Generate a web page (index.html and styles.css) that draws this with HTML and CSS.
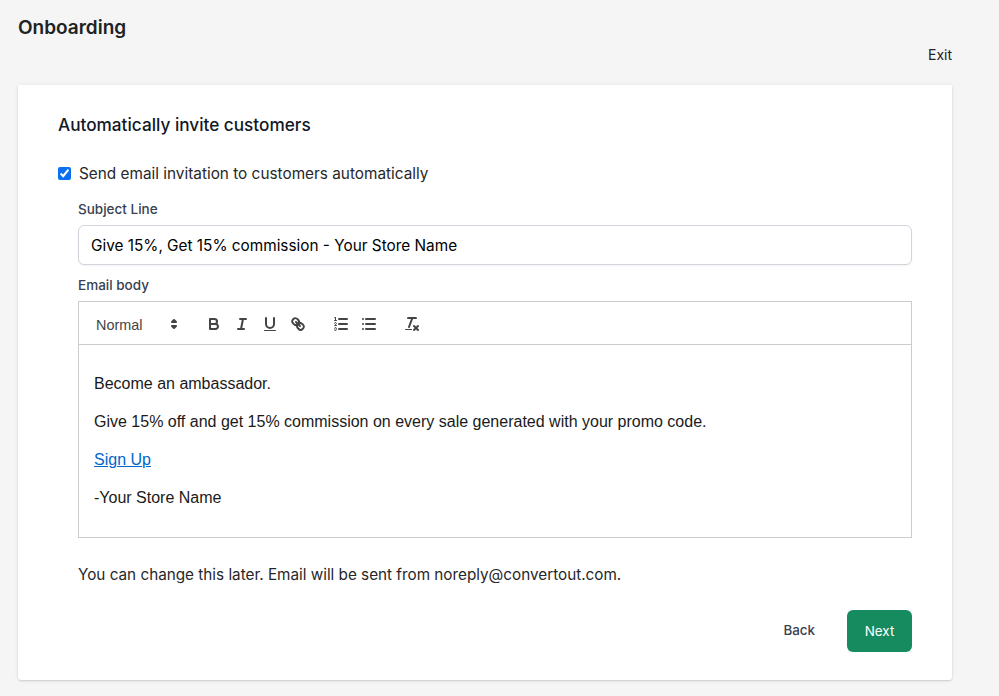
FILE: index.html
```html
<!DOCTYPE html>
<html lang="en">
<head>
<meta charset="utf-8">
<title>Onboarding</title>
<link rel="stylesheet" href="styles.css">
</head>
<body>
<header class="page-head">
  <h1 class="page-title">Onboarding</h1>
  <div class="exit-row"><a class="exit" href="#">Exit</a></div>
</header>
<main class="card">
  <h2 class="card-title">Automatically invite customers</h2>
  <label class="check-row">
    <input class="check" type="checkbox" checked>
    <span>Send email invitation to customers automatically</span>
  </label>
  <div class="fields">
    <label class="field-label" for="subject">Subject Line</label>
    <input class="text-input" id="subject" type="text" value="Give 15%, Get 15% commission - Your Store Name">
    <div class="field-label body-label">Email body</div>
    <div class="toolbar">
      <span class="picker">
        <span>Normal</span>
        <svg class="icon picker-icon" viewBox="0 0 18 18"><polygon class="st" points="7 11 9 13 11 11 7 11"/><polygon class="st" points="7 7 9 5 11 7 7 7"/></svg>
      </span>
      <span class="group">
        <span class="tool"><svg class="icon" viewBox="0 0 18 18"><path class="st" d="M5,4H9.5A2.5,2.5,0,0,1,12,6.5v0A2.5,2.5,0,0,1,9.5,9H5A0,0,0,0,1,5,9V4A0,0,0,0,1,5,4Z"/><path class="st" d="M5,9h5.5A2.5,2.5,0,0,1,13,11.5v0A2.5,2.5,0,0,1,10.5,14H5a0,0,0,0,1,0,0V9A0,0,0,0,1,5,9Z"/></svg></span>
        <span class="tool"><svg class="icon" viewBox="0 0 18 18"><line class="st" x1="7" x2="13" y1="4" y2="4"/><line class="st" x1="5" x2="11" y1="14" y2="14"/><line class="st" x1="8" x2="10" y1="14" y2="4"/></svg></span>
        <span class="tool"><svg class="icon" viewBox="0 0 18 18"><path class="st" d="M5,3V9a4.012,4.012,0,0,0,4,4H9a4.012,4.012,0,0,0,4-4V3"/><rect class="fl" height="1" rx="0.5" ry="0.5" width="12" x="3" y="15"/></svg></span>
        <span class="tool"><svg class="icon" viewBox="0 0 18 18"><line class="st" x1="7" x2="11" y1="7" y2="11"/><path class="st" d="M8.9,4.577a3.476,3.476,0,0,1,.36,4.679A3.476,3.476,0,0,1,4.577,8.9C3.185,7.5,2.035,6.4,4.217,4.217S7.5,3.185,8.9,4.577Z"/><path class="st" d="M13.423,9.1a3.476,3.476,0,0,0-4.679-.36,3.476,3.476,0,0,0,.36,4.679c1.392,1.392,2.5,2.542,4.679.36S14.815,10.5,13.423,9.1Z"/></svg></span>
      </span>
      <span class="group">
        <span class="tool"><svg class="icon" viewBox="0 0 18 18"><line class="st" x1="7" x2="15" y1="4" y2="4"/><line class="st" x1="7" x2="15" y1="9" y2="9"/><line class="st" x1="7" x2="15" y1="14" y2="14"/><line class="st thin" x1="2.5" x2="4.5" y1="5.5" y2="5.5"/><path class="fl" d="M3.5,6A0.5,0.5,0,0,1,3,5.5V3.085l-0.276.138A0.5,0.5,0,0,1,2.053,3c-0.124-.247-0.023-0.324.224-0.447l1-.5A0.5,0.5,0,0,1,4,2.5v3A0.5,0.5,0,0,1,3.5,6Z"/><path class="st thin" d="M4.5,10.5h-2c0-.234,1.85-1.076,1.85-2.234A0.959,0.959,0,0,0,2.5,8.156"/><path class="st thin" d="M2.5,14.846a0.959,0.959,0,0,0,1.85-.109A0.7,0.7,0,0,0,3.75,14a0.688,0.688,0,0,0,.6-0.736,0.959,0.959,0,0,0-1.85-.109"/></svg></span>
        <span class="tool"><svg class="icon" viewBox="0 0 18 18"><line class="st" x1="6" x2="15" y1="4" y2="4"/><line class="st" x1="6" x2="15" y1="9" y2="9"/><line class="st" x1="6" x2="15" y1="14" y2="14"/><line class="st" x1="3" x2="3" y1="4" y2="4"/><line class="st" x1="3" x2="3" y1="9" y2="9"/><line class="st" x1="3" x2="3" y1="14" y2="14"/></svg></span>
      </span>
      <span class="group">
        <span class="tool"><svg class="icon" viewBox="0 0 18 18"><line class="st" x1="5" x2="13" y1="3" y2="3"/><line class="st" x1="6" x2="9.35" y1="12" y2="3"/><line class="st" x1="11" x2="15" y1="11" y2="15"/><line class="st" x1="15" x2="11" y1="11" y2="15"/><rect class="fl" height="1" rx="0.5" ry="0.5" width="7" x="2" y="14"/></svg></span>
      </span>
    </div>
    <div class="editor">
      <p>Become an ambassador.</p>
      <p>Give 15% off and get 15% commission on every sale generated with your promo code.</p>
      <p><a href="#">Sign Up</a></p>
      <p>-Your Store Name</p>
    </div>
    <p class="note">You can change this later. Email will be sent from noreply@convertout.com.</p>
    <div class="actions">
      <button class="btn btn-plain" type="button">Back</button>
      <button class="btn btn-primary" type="button">Next</button>
    </div>
  </div>
</main>
</body>
</html>
```

FILE: styles.css
```css
* { box-sizing: border-box; }
html, body { margin: 0; padding: 0; }
body {
  background: #f5f5f5;
  font-family: Inter, "Liberation Sans", sans-serif;
  color: #1a202c;
  height: 696px;
  overflow: hidden;
}
.page-head { padding: 16px 47px 0 18px; height: 85px; }
.page-title {
  margin: 0;
  font-size: 19px;
  line-height: 24px;
  font-weight: 600;
  color: #202223;
}
.exit-row { display: flex; justify-content: flex-end; margin-top: 6px; }
.exit { font-size: 14px; line-height: 18px; color: #202223; text-decoration: none; }
.card {
  margin-left: 18px;
  width: 934px;
  height: 595px;
  background: #fff;
  box-shadow: 0 0 5px rgba(23, 24, 24, 0.05), 0 1px 2px rgba(0, 0, 0, 0.15);
  padding: 30px 40px 0;
  border-radius: 0 0 3px 3px;
}
.card-title { margin: 0; font-size: 17.2px; line-height: 20px; font-weight: 500; color: #111827; }
.check-row { display: flex; align-items: center; gap: 8px; margin-top: 29px; font-size: 15.35px; line-height: 20px; color: #27272a; }
.check { width: 13px; height: 13px; margin: -1px 0 0; accent-color: #0b6ff0; }
.fields { padding: 0 0 0 20px; }
.field-label { display: block; margin-top: 15px; font-size: 13.5px; line-height: 20px; font-weight: 500; color: #374151; }
.text-input {
  display: block;
  width: 100%;
  height: 40px;
  margin-top: 6px;
  padding: 0 12px;
  border: 1px solid #d1d5db;
  border-radius: 6px;
  font: 15.35px Inter, "Liberation Sans", sans-serif;
  color: #000;
  box-shadow: 0 1px 2px rgba(0, 0, 0, 0.05);
}
.body-label { margin-top: 10px; }
.toolbar {
  display: flex;
  align-items: center;
  margin-top: 6px;
  height: 44px;
  padding: 9px 8px 7px;
  border: 1px solid #ccc;
  color: #444;
  font-family: "Liberation Sans", Arial, sans-serif;
}
.picker {
  display: flex;
  align-items: center;
  justify-content: space-between;
  width: 98px;
  height: 24px;
  padding: 2px 2px 0 9px;
  margin-right: 15px;
  font-size: 14.4px;
  font-weight: 500;
}
.picker-icon { margin-top: -2px; }
.group { display: flex; margin-right: 15px; }
.tool { display: block; width: 28px; height: 24px; padding: 3px 5px; }
.icon { display: block; width: 18px; height: 18px; }
.st { fill: none; stroke: #444; stroke-width: 2; stroke-linecap: round; stroke-linejoin: round; }
.thin { stroke-width: 1; }
.fl { fill: #444; }
.editor {
  height: 193px;
  border: 1px solid #ccc;
  border-top: 0;
  padding: 27px 15px 0;
  font-family: "Liberation Sans", Arial, sans-serif;
  font-size: 16px;
  line-height: 24px;
  color: #1a1a1a;
}
.editor p { margin: 0 0 14px; }
.editor a { color: #06c; }
.note { margin: 25px 0 0; font-size: 15.27px; line-height: 24px; color: #27272a; }
.actions { display: flex; justify-content: flex-end; align-items: center; margin-top: 23px; }
.btn { border: 0; font: 500 13.4px/20px Inter, "Liberation Sans", sans-serif; cursor: pointer; }
.btn-plain { background: none; color: #374151; margin: -2px 32px 0 0; padding: 0; }
.btn-primary { background: #178b60; color: #fff; width: 65px; height: 42px; border-radius: 6px; font-weight: 400; }
```
